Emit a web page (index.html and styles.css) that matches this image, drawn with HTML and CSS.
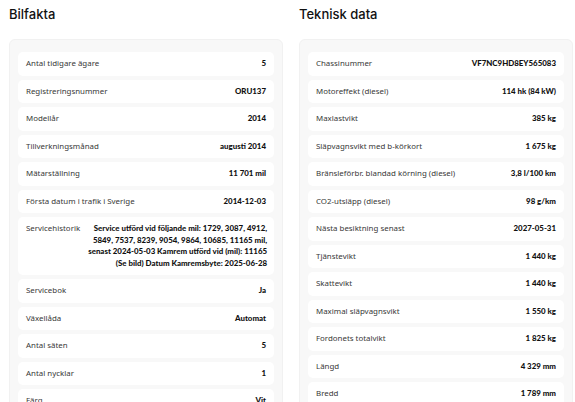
FILE: index.html
```html
<!DOCTYPE html>
<html lang="sv">
<head>
<meta charset="utf-8">
<title>Bilfakta</title>
<link rel="stylesheet" href="styles.css">
</head>
<body>
<main class="page">
  <section class="col">
    <h2 class="title">Bilfakta</h2>
    <div class="panel">
      <div class="row"><span class="label">Antal tidigare ägare</span><span class="value">5</span></div>
      <div class="row"><span class="label">Registreringsnummer</span><span class="value">ORU137</span></div>
      <div class="row"><span class="label">Modellår</span><span class="value">2014</span></div>
      <div class="row"><span class="label">Tillverkningsmånad</span><span class="value">augusti 2014</span></div>
      <div class="row"><span class="label">Mätarställning</span><span class="value">11 701 mil</span></div>
      <div class="row"><span class="label">Första datum i trafik i Sverige</span><span class="value">2014-12-03</span></div>
      <div class="row"><span class="label">Servicehistorik</span><span class="value">Service utförd vid följande mil: 1729, 3087, 4912,<br>5849, 7537, 8239, 9054, 9864, 10685, 11165 mil,<br>senast 2024-05-03 Kamrem utförd vid (mil): 11165<br>(Se bild) Datum Kamremsbyte: 2025-06-28</span></div>
      <div class="row"><span class="label">Servicebok</span><span class="value">Ja</span></div>
      <div class="row"><span class="label">Växellåda</span><span class="value">Automat</span></div>
      <div class="row"><span class="label">Antal säten</span><span class="value">5</span></div>
      <div class="row"><span class="label">Antal nycklar</span><span class="value">1</span></div>
      <div class="row"><span class="label">Färg</span><span class="value">Vit</span></div>
    </div>
  </section>
  <section class="col">
    <h2 class="title">Teknisk data</h2>
    <div class="panel">
      <div class="row"><span class="label">Chassinummer</span><span class="value">VF7NC9HD8EY565083</span></div>
      <div class="row"><span class="label">Motoreffekt (diesel)</span><span class="value">114 hk (84 kW)</span></div>
      <div class="row"><span class="label">Maxlastvikt</span><span class="value">385 kg</span></div>
      <div class="row"><span class="label">Släpvagnsvikt med b-körkort</span><span class="value">1 675 kg</span></div>
      <div class="row"><span class="label">Bränsleförbr. blandad körning (diesel)</span><span class="value">3,8 l/100 km</span></div>
      <div class="row"><span class="label">CO2-utsläpp (diesel)</span><span class="value">98 g/km</span></div>
      <div class="row"><span class="label">Nästa besiktning senast</span><span class="value">2027-05-31</span></div>
      <div class="row"><span class="label">Tjänstevikt</span><span class="value">1 440 kg</span></div>
      <div class="row"><span class="label">Skattevikt</span><span class="value">1 440 kg</span></div>
      <div class="row"><span class="label">Maximal släpvagnsvikt</span><span class="value">1 550 kg</span></div>
      <div class="row"><span class="label">Fordonets totalvikt</span><span class="value">1 825 kg</span></div>
      <div class="row"><span class="label">Längd</span><span class="value">4 329 mm</span></div>
      <div class="row"><span class="label">Bredd</span><span class="value">1 789 mm</span></div>
    </div>
  </section>
</main>
</body>
</html>
```

FILE: styles.css
```css
* { box-sizing: border-box; }
html, body { margin: 0; padding: 0; background: #ffffff; }
body {
  font-family: "Noto Sans", "Open Sans", sans-serif;
  color: #222;
}
.page {
  display: grid;
  grid-template-columns: 274px 274px;
  column-gap: 16px;
  padding: 0 0 0 9px;
}
.col { display: flex; flex-direction: column; }
.title {
  margin: 0;
  height: 39px;
  padding-top: 5px;
  font-family: "Inter", "Lato", sans-serif;
  font-weight: 500;
  font-size: 13px;
  line-height: 18px;
  color: #111;
  letter-spacing: 0;
}
.panel {
  background: #f8f8f8;
  border: 1px solid #f1f1f1;
  border-radius: 6px;
  padding: 12px 8px 12px;
  display: flex;
  flex-direction: column;
  gap: 4px;
}
.row {
  background: #fff;
  border-radius: 5px;
  padding: 6px 8px;
  display: flex;
  justify-content: space-between;
  align-items: flex-start;
  gap: 8px;
  line-height: 11.5px;
}
.label {
  flex-shrink: 0;
  font-size: 7.9px;
  color: #383838;
  white-space: nowrap;
}
.value {
  font-family: "Lato", "Inter", sans-serif;
  font-weight: 900;
  font-size: 7.9px;
  color: #111;
  text-align: right;
  white-space: nowrap;
}
```
